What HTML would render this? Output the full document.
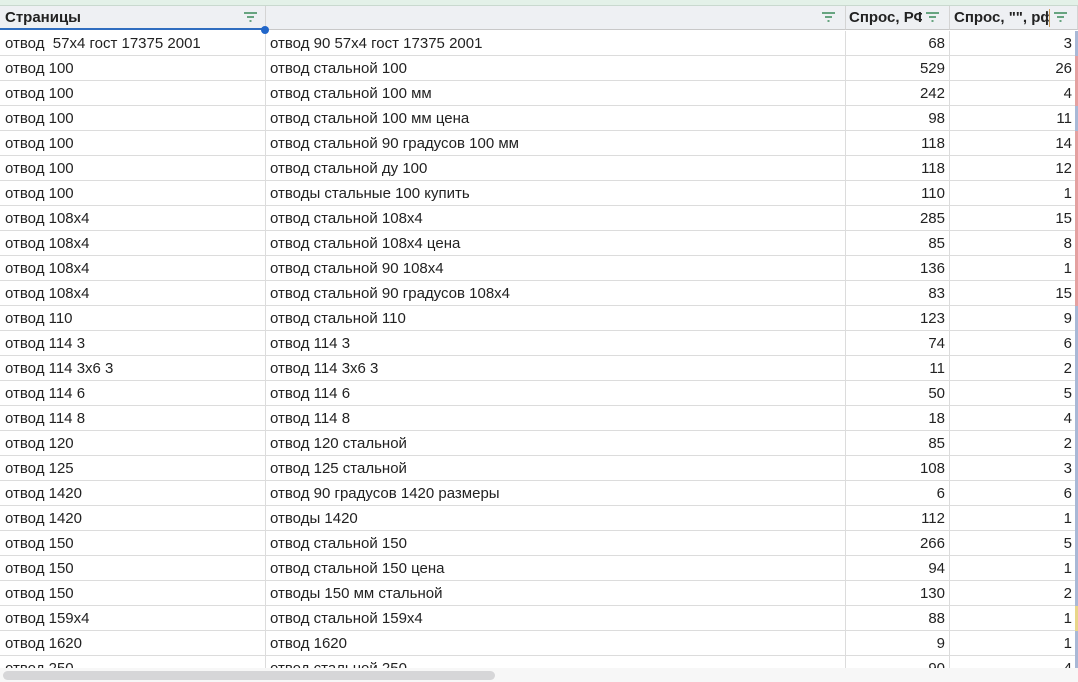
<!DOCTYPE html>
<html><head><meta charset="utf-8"><style>
body{margin:0;width:1078px;height:682px;overflow:hidden;background:#fff;font-family:"Liberation Sans",sans-serif;font-size:15px;color:#222;position:relative}
.top{position:absolute;left:0;top:0;width:1078px;height:5px;background:#e3f1e8;border-bottom:1px solid #c9d9cf}
.hdr{position:absolute;top:6px;height:24px;background:#eef0f3;border-right:1px solid #d4d4d4;border-bottom:1px solid #c8c8c8;font-weight:bold;line-height:24px;box-sizing:border-box;overflow:hidden;white-space:nowrap}
.f{position:absolute;top:0;width:22px;height:24px;background:#eef0f3}
.f path{stroke:#3a8a5a;stroke-width:1.5}
.row{position:absolute;left:0;width:1075px;height:25px;border-bottom:1px solid #dcdcdc;box-sizing:border-box;line-height:26px}
.c{position:absolute;top:0;height:25px;border-right:1px solid #dcdcdc;box-sizing:border-box;white-space:nowrap;overflow:hidden}
.a{left:0;width:266px;padding-left:5px}
.b{left:266px;width:580px;padding-left:4px}
.n{left:846px;width:104px;text-align:right;padding-right:4px}
.m{left:950px;width:125px;text-align:right;padding-right:3px;border-right:none}
.sb{position:absolute;left:0;top:668px;width:1078px;height:14px;background:#f7f7f7}
.th{position:absolute;left:3px;top:671px;width:492px;height:9px;border-radius:5px;background:#d6d6d8}
.st{position:absolute;left:1075px;width:3px;height:25px}
</style></head><body>
<div class="top"></div>
<div class="hdr" style="left:0;width:266px;padding-left:5px;border-bottom:2px solid #2f6dbf">Страницы
<svg class="f" style="left:240px" viewBox="0 0 22 24"><path d="M4 7h13M7 11h7M9.5 15h2"/></svg></div>
<div style="position:absolute;left:261px;top:26px;width:8px;height:8px;border-radius:50%;background:#2166c9;z-index:3"></div>
<div class="hdr" style="left:266px;width:580px"><svg class="f" style="left:552px" viewBox="0 0 22 24"><path d="M4 7h13M7 11h7M9.5 15h2"/></svg></div>
<div class="hdr" style="left:846px;width:104px;padding-left:3px">Спрос, РФ<svg class="f" style="left:76px" viewBox="0 0 22 24"><path d="M4 7h13M7 11h7M9.5 15h2"/></svg></div>
<div class="hdr" style="left:950px;width:128px;padding-left:4px">Спрос, "", рф<svg class="f" style="left:100px" viewBox="0 0 22 24"><path d="M4 7h13M7 11h7M9.5 15h2"/></svg><div style="position:absolute;left:99px;top:3px;width:1px;height:18px;background:#c89a5a"></div></div>
<div id="rows"></div>
<div class="sb"></div><div class="th"></div>
<script>
var d=[["отвод &nbsp;57х4 гост 17375 2001","отвод 90 57х4 гост 17375 2001",68,3,"#a9b8d6"],
["отвод 100","отвод стальной 100",529,26,"#e5a0a0"],
["отвод 100","отвод стальной 100 мм",242,4,"#e5a0a0"],
["отвод 100","отвод стальной 100 мм цена",98,11,"#a9b8d6"],
["отвод 100","отвод стальной 90 градусов 100 мм",118,14,"#e5a0a0"],
["отвод 100","отвод стальной ду 100",118,12,"#e5a0a0"],
["отвод 100","отводы стальные 100 купить",110,1,"#e5a0a0"],
["отвод 108х4","отвод стальной 108х4",285,15,"#e5a0a0"],
["отвод 108х4","отвод стальной 108х4 цена",85,8,"#e5a0a0"],
["отвод 108х4","отвод стальной 90 108х4",136,1,"#e5a0a0"],
["отвод 108х4","отвод стальной 90 градусов 108х4",83,15,"#e5a0a0"],
["отвод 110","отвод стальной 110",123,9,"#a9b8d6"],
["отвод 114 3","отвод 114 3",74,6,"#a9b8d6"],
["отвод 114 3х6 3","отвод 114 3х6 3",11,2,"#a9b8d6"],
["отвод 114 6","отвод 114 6",50,5,"#a9b8d6"],
["отвод 114 8","отвод 114 8",18,4,"#a9b8d6"],
["отвод 120","отвод 120 стальной",85,2,"#a9b8d6"],
["отвод 125","отвод 125 стальной",108,3,"#a9b8d6"],
["отвод 1420","отвод 90 градусов 1420 размеры",6,6,"#a9b8d6"],
["отвод 1420","отводы 1420",112,1,"#a9b8d6"],
["отвод 150","отвод стальной 150",266,5,"#a9b8d6"],
["отвод 150","отвод стальной 150 цена",94,1,"#a9b8d6"],
["отвод 150","отводы 150 мм стальной",130,2,"#a9b8d6"],
["отвод 159х4","отвод стальной 159х4",88,1,"#e8d58a"],
["отвод 1620","отвод 1620",9,1,"#a9b8d6"],
["отвод 250","отвод стальной 250",90,4,"#a9b8d6"]];
var h="";d.forEach(function(r,i){var t=31+i*25;h+='<div class="row" style="top:'+t+'px"><div class="c a">'+r[0]+'</div><div class="c b">'+r[1]+'</div><div class="c n">'+r[2]+'</div><div class="c m">'+r[3]+'</div></div><div class="st" style="top:'+t+'px;background:'+r[4]+'"></div>';});
document.getElementById("rows").innerHTML=h;
</script>
</body></html>
